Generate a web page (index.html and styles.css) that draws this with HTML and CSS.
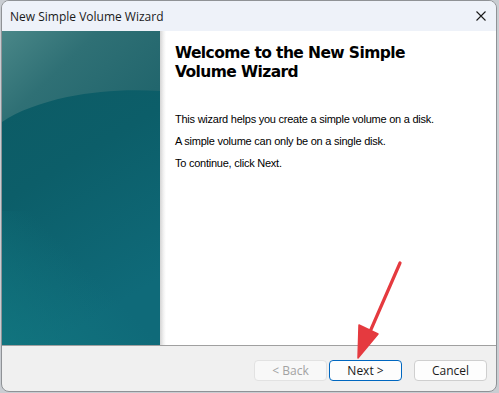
FILE: index.html
```html
<!DOCTYPE html>
<html>
<head>
<meta charset="utf-8">
<link rel="stylesheet" href="styles.css">
</head>
<body>
<div class="window">
  <div class="titlebar">
    <span class="title">New Simple Volume Wizard</span>
    <svg class="close" width="10" height="10" viewBox="0 0 10 10"><path d="M0.5 0.5 L9.5 9.5 M9.5 0.5 L0.5 9.5" stroke="#1a1a1a" stroke-width="1.1" fill="none"/></svg>
  </div>
  <div class="content">
    <div class="banner">
      <svg class="banner-art" width="158" height="314" viewBox="0 0 158 314" preserveAspectRatio="none">
        <defs>
          <linearGradient id="bg" x1="0" y1="0" x2="0.3" y2="1">
            <stop offset="0" stop-color="#0d5a63"/>
            <stop offset="0.5" stop-color="#0c5e69"/>
            <stop offset="1" stop-color="#0f6a79"/>
          </linearGradient>
          <linearGradient id="top" x1="0" y1="0" x2="1" y2="0.6">
            <stop offset="0" stop-color="#4a8788"/>
            <stop offset="0.45" stop-color="#2f7075"/>
            <stop offset="1" stop-color="#22666d"/>
          </linearGradient>
          <linearGradient id="bl" x1="0" y1="1" x2="0.6" y2="0.5">
            <stop offset="0" stop-color="#127780" stop-opacity="0.8"/>
            <stop offset="1" stop-color="#127780" stop-opacity="0"/>
          </linearGradient>
        </defs>
        <rect width="158" height="314" fill="url(#bg)"/>
        <rect y="180" width="158" height="134" fill="url(#bl)"/>
        <path d="M0 0 H158 V60 C125 58 95 60 65 66 C38 72 16 80 0 91 Z" fill="url(#top)"/>
      </svg>
    </div>
    <div class="shade"></div>
    <div class="main">
      <h1 class="heading">Welcome to the New Simple Volume Wizard</h1>
      <p class="para">This wizard helps you create a simple volume on a disk.</p>
      <p class="para">A simple volume can only be on a single disk.</p>
      <p class="para">To continue, click Next.</p>
    </div>
  </div>
  <div class="footer">
    <button class="btn disabled">&lt; Back</button>
    <button class="btn primary">Next &gt;</button>
    <button class="btn cancel">Cancel</button>
  </div>
  <svg class="arrow" width="60" height="110" viewBox="0 0 60 110">
    <path d="M52 7 L21 78" stroke="#e53a3f" stroke-width="3.2" stroke-linecap="round" fill="none"/>
    <path d="M10 102 L11 69 L30 78 Z" fill="#e53a3f" stroke="#e53a3f" stroke-width="1.5" stroke-linejoin="round"/>
  </svg>
</div>
</body>
</html>
```
FILE: styles.css
```css
html, body {
  margin: 0;
  padding: 0;
}
body {
  width: 499px;
  height: 393px;
  background: #c9cdd2;
  overflow: hidden;
}
.window {
  position: relative;
  margin: 0 0 0 1px;
  width: 496px;
  height: 392px;
  box-sizing: border-box;
  border: 1px solid #8f9296;
  border-radius: 8px;
  overflow: hidden;
  background: #f0f0f0;
  display: flex;
  flex-direction: column;
}
.titlebar {
  height: 30px;
  flex: none;
  background: #eef2f9;
  display: flex;
  align-items: center;
  justify-content: space-between;
  padding: 0 9px 0 8px;
}
.title {
  font-family: "Open Sans", "Noto Sans", sans-serif;
  font-size: 12px;
  color: #1a1a1a;
}
.close {
  display: block;
  margin-right: 1px;
}
.content {
  height: 314px;
  flex: none;
  display: flex;
  background: #ffffff;
}
.banner {
  width: 158px;
  flex: none;
}
.banner-art {
  display: block;
}
.shade {
  width: 6px;
  flex: none;
  background: linear-gradient(to right, #d4d4d4, #f2f2f2 60%, #ffffff);
}
.main {
  padding: 13px 0 0 9px;
  flex: 1;
}
.heading {
  margin: 0 0 31px 0;
  width: 250px;
  font-family: "DejaVu Sans", Verdana, sans-serif;
  font-weight: bold;
  font-size: 15.5px;
  letter-spacing: -0.6px;
  line-height: 19px;
  color: #000;
}
.para {
  margin: 0 0 9px 0;
  font-family: "Liberation Sans", Arial, sans-serif;
  font-size: 11px;
  letter-spacing: -0.24px;
  line-height: 13px;
  color: #000;
}
.footer {
  flex: none;
  height: 46px;
  border-top: 1px solid #a0a0a0;
  box-sizing: border-box;
  display: flex;
  align-items: flex-start;
  justify-content: flex-end;
  padding: 14px 9px 0 0;
}
.btn {
  width: 73px;
  height: 21px;
  box-sizing: border-box;
  border: 1px solid #cfcfcf;
  border-radius: 4px;
  background: #fdfdfd;
  font-family: "Open Sans", "Noto Sans", sans-serif;
  font-size: 12px;
  color: #1a1a1a;
  padding: 0;
  line-height: 19px;
}
.btn.disabled {
  color: #a2a2a2;
  border-color: #e2e2e2;
  background: #f8f8f8;
}
.btn.primary {
  margin-left: 2px;
  border-color: #0067c0;
}
.btn.cancel {
  margin-left: 12px;
}
.arrow {
  position: absolute;
  left: 346px;
  top: 255px;
}
```
